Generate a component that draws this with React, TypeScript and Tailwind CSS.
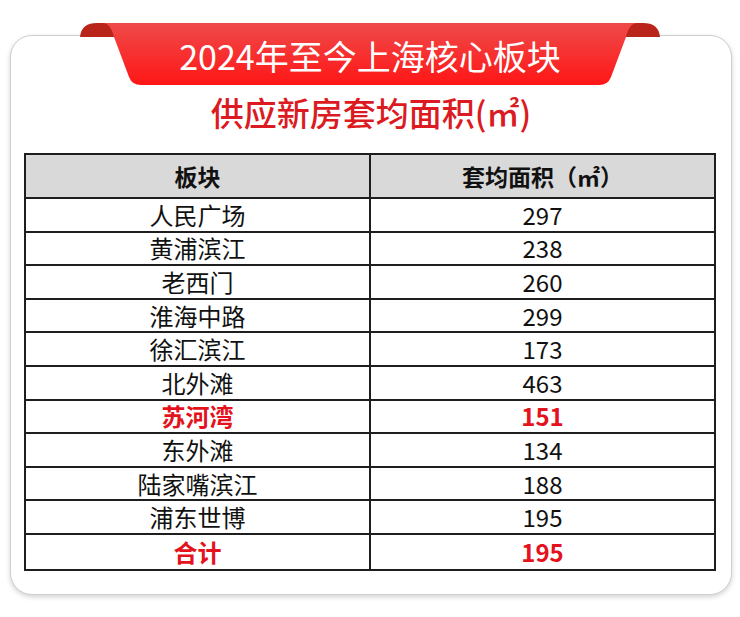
import React from "react";

// 板块数据
const rows: { name: string; area: string; hl?: boolean }[] = [
  { name: "人民广场", area: "297" },
  { name: "黄浦滨江", area: "238" },
  { name: "老西门", area: "260" },
  { name: "淮海中路", area: "299" },
  { name: "徐汇滨江", area: "173" },
  { name: "北外滩", area: "463" },
  { name: "苏河湾", area: "151", hl: true },
  { name: "东外滩", area: "134" },
  { name: "陆家嘴滨江", area: "188" },
  { name: "浦东世博", area: "195" },
  { name: "合计", area: "195", hl: true },
];

const font = { fontFamily: '"Noto Sans CJK SC", "Noto Sans", sans-serif' };

function Ribbon() {
  return (
    <div className="absolute left-[78px] top-[21px] w-[584px] h-[66px]">
      <svg width="584" height="66" viewBox="0 0 584 66" className="absolute inset-0">
        <defs>
          <linearGradient id="rib" x1="0" y1="0" x2="0" y2="1">
            <stop offset="0" stopColor="#ef4a4a" />
            <stop offset="1" stopColor="#ff1616" />
          </linearGradient>
        </defs>
        {/* folded tabs */}
        <path d="M2,16 C3,6 9,2 19,2 L34,2 C36,8 37,12 38,16 Z" fill="#b9241b" />
        <path d="M582,16 C581,6 575,2 565,2 L550,2 C548,8 547,12 546,16 Z" fill="#b9241b" />
        {/* front band */}
        <path
          d="M24,2 C31,2 34,8 36,16 L51,56 Q54,64 63,64 L521,64 Q530,64 533,56 L548,16 C550,8 553,2 560,2 Z"
          fill="url(#rib)"
        />
      </svg>
      <div className="relative flex h-full items-center justify-center pt-[4px] text-[34px] leading-none text-white">
        2024年至今上海核心板块
      </div>
    </div>
  );
}

export default function App() {
  return (
    <div className="relative w-[740px] h-[617px] bg-white pt-[35px]" style={font}>
      <div className="ml-[10px] w-[722px] h-[560px] rounded-[22px] border border-[#cfcfcf] bg-white shadow-[0_2px_5px_rgba(0,0,0,0.18)] pt-[56px]">
        <div className="text-center text-[33px] leading-[40px] font-medium text-[#dc1a22]">
          供应新房套均面积(㎡)
        </div>
        <div className="ml-[13px] mt-[21px] w-[692px] border-2 border-[#1e1e1e] text-[#111]">
          <div className="grid grid-cols-[345px_343px] h-[44px] bg-[#d9d9d9] border-b-2 border-[#1e1e1e] text-[23px] font-bold">
            <div className="flex items-center justify-center border-r-2 border-[#1e1e1e]">板块</div>
            <div className="flex items-center justify-center">套均面积（㎡）</div>
          </div>
          {rows.map((r, i) => (
            <div
              key={r.name}
              className={`grid grid-cols-[345px_343px] h-[33.6px] text-[24px] leading-none ${
                i < rows.length - 1 ? "border-b-2 border-[#1e1e1e]" : ""
              } ${r.hl ? "text-[#e3121c] font-bold" : ""}`}
            >
              <div className="flex items-center justify-center border-r-2 border-[#1e1e1e]">{r.name}</div>
              <div className="flex items-center justify-center">{r.area}</div>
            </div>
          ))}
        </div>
      </div>
      <Ribbon />
    </div>
  );
}
